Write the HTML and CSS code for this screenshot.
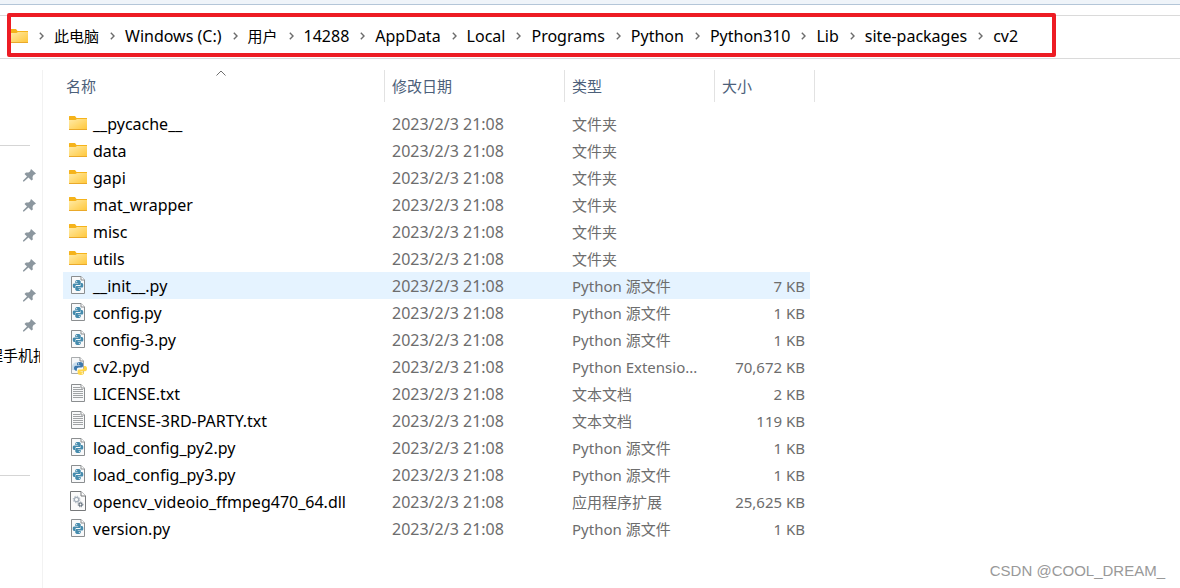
FILE: index.html
```html
<!DOCTYPE html>
<html lang="zh-CN">
<head>
<meta charset="utf-8">
<title>cv2</title>
<meta name="viewport" content="width=device-width, initial-scale=1">
<link rel="stylesheet" href="styles.css">
</head>
<body>
<svg class="sprite" aria-hidden="true">
  <defs>
    <linearGradient id="gold" x1="0" y1="0" x2="1" y2="1">
      <stop offset="0" stop-color="#ffeba8"/><stop offset="1" stop-color="#ffc637"/>
    </linearGradient>
    <symbol id="folder" viewBox="0 0 18 14">
      <path d="M0 0.500Q0 0 .5 0H6L7.500 2H18V5H0Z" fill="#f5b31b"/>
      <path d="M0 4H6.500L8 3H18V14H0Z" fill="url(#gold)"/>
      <path d="M0 13.500H18" stroke="#eaa92a"/>
    </symbol>
    <symbol id="page" viewBox="0 0 14 18">
      <path d="M.5.5H10L13.500 4V17.500H.5Z" fill="#f8f9fa" stroke="#8b8e90"/>
      <path d="M10 .5V4H13.500" fill="#fff" stroke="#8b8e90"/>
    </symbol>
    <symbol id="snake" viewBox="0 0 10 10">
      <path d="M5 0C3.200 0 2.500.6 2.500 1.600V2.700H5.200V3.100H1.500C.5 3.100 0 3.900 0 5.100S.6 7.200 1.500 7.200H2.400V6C2.400 5.100 3.100 4.500 4 4.500H6.300C7 4.500 7.500 4 7.500 3.300V1.600C7.500.6 6.600 0 5 0Z"/>
      <circle cx="3.800" cy="1.500" r=".5" fill="#fff"/>
    </symbol>
    <symbol id="py" viewBox="0 0 14 18">
      <use href="#page" width="14" height="18"/>
      <g fill="#458bad"><use href="#snake" x="1.500" y="4" width="11" height="11"/>
      <use href="#snake" x="1.500" y="4" width="11" height="11" transform="rotate(180 7 9.500)"/></g>
    </symbol>
    <symbol id="pyd" viewBox="0 0 16 18">
      <path d="M.5.5H9L12.500 4V16.500H.5Z" fill="#f6f7f8" stroke="#a9acae"/>
      <path d="M9 .5V4H12.500" fill="#fff" stroke="#8b8e90"/>
      <path d="M1 9Q2 5 7 5L4 13H1Z" fill="#c9ddec"/>
      <use href="#snake" x="3" y="5" width="12" height="12" fill="#3d78ad"/>
      <use href="#snake" x="3.500" y="5.500" width="12.500" height="12.500" fill="#ffd649" transform="rotate(180 9.750 11.750)"/>
    </symbol>
    <symbol id="txt" viewBox="0 0 14 18">
      <use href="#page" width="14" height="18"/>
      <path d="M2 3.500H9M2 5.500H12M2 7.500H12M2 9.500H12M2 11.500H12M2 13.500H12" stroke="#a0a3a5"/>
    </symbol>
    <symbol id="dll" viewBox="0 0 16 20">
      <path d="M.5.5H11L15.500 5V19.500H.5Z" fill="#fbfbfb" stroke="#77797b"/>
      <path d="M11 .5V5H15.500" fill="#fff" stroke="#77797b"/>
      <circle cx="6.500" cy="8.500" r="2.200" fill="none" stroke="#a4afba" stroke-width="1.300"/>
      <circle cx="6.500" cy="8.500" r="3.300" fill="none" stroke="#a4afba" stroke-dasharray="1.300 1.290"/>
      <circle cx="10.500" cy="13.500" r="1.500" fill="none" stroke="#65717d" stroke-width="1.200"/>
      <circle cx="10.500" cy="13.500" r="2.400" fill="none" stroke="#65717d" stroke-dasharray="1 .885"/>
    </symbol>
    <symbol id="pin" viewBox="0 0 13 13">
      <path d="M8 0L13 4.500L11.500 5.500L10.500 6L9.500 8L9.800 10.500L8.500 11.500L5.500 8.500L1 12.500L0 12.500L0 11.500L4 7.500L1.500 5L3 3.500L5.500 3.600L7 2.500Z" fill="#8c979f"/>
    </symbol>
    <symbol id="chevron" viewBox="0 0 5 8">
      <path d="M.8.8L4 4L.8 7.200" fill="none" stroke="#6c6c6c" stroke-width="1.400"/>
    </symbol>
  </defs>
</svg>

<div class="toolbar"></div>
<header class="address">
  <nav class="crumbs" aria-label="路径">
    <svg class="i-folder"><use href="#folder"/></svg>
    <svg class="chev"><use href="#chevron"/></svg><a class="zh" href="#">此电脑</a>
    <svg class="chev"><use href="#chevron"/></svg><a href="#">Windows (C:)</a>
    <svg class="chev"><use href="#chevron"/></svg><a class="zh" href="#">用户</a>
    <svg class="chev"><use href="#chevron"/></svg><a href="#">14288</a>
    <svg class="chev"><use href="#chevron"/></svg><a href="#">AppData</a>
    <svg class="chev"><use href="#chevron"/></svg><a href="#">Local</a>
    <svg class="chev"><use href="#chevron"/></svg><a href="#">Programs</a>
    <svg class="chev"><use href="#chevron"/></svg><a href="#">Python</a>
    <svg class="chev"><use href="#chevron"/></svg><a href="#">Python310</a>
    <svg class="chev"><use href="#chevron"/></svg><a href="#">Lib</a>
    <svg class="chev"><use href="#chevron"/></svg><a href="#">site-packages</a>
    <svg class="chev"><use href="#chevron"/></svg><a href="#">cv2</a>
  </nav>
</header>

<div class="body">
  <aside class="side">
    <hr>
    <ul class="pins">
      <li><svg><use href="#pin"/></svg></li>
      <li><svg><use href="#pin"/></svg></li>
      <li><svg><use href="#pin"/></svg></li>
      <li><svg><use href="#pin"/></svg></li>
      <li><svg><use href="#pin"/></svg></li>
      <li><svg><use href="#pin"/></svg></li>
      <li class="recent">程手机拍</li>
    </ul>
    <hr class="lower">
  </aside>
  <main class="files">
    <table>
      <colgroup><col class="c-name"><col class="c-date"><col class="c-type"><col class="c-size"></colgroup>
      <thead>
        <tr>
          <th aria-sort="ascending"><button type="button">名称</button><svg class="sort" viewBox="0 0 10 6"><path d="M.5 5.500L5 1L9.500 5.500" fill="none" stroke="#6f6f6f"/></svg></th>
          <th><button type="button">修改日期</button></th>
          <th><button type="button">类型</button></th>
          <th><button type="button">大小</button></th>
        </tr>
      </thead>
      <tbody>
        <tr><td><span class="name"><svg class="i-folder"><use href="#folder"/></svg>__pycache__</span></td><td class="date">2023/2/3 21:08</td><td>文件夹</td><td></td></tr>
        <tr><td><span class="name"><svg class="i-folder"><use href="#folder"/></svg>data</span></td><td class="date">2023/2/3 21:08</td><td>文件夹</td><td></td></tr>
        <tr><td><span class="name"><svg class="i-folder"><use href="#folder"/></svg>gapi</span></td><td class="date">2023/2/3 21:08</td><td>文件夹</td><td></td></tr>
        <tr><td><span class="name"><svg class="i-folder"><use href="#folder"/></svg>mat_wrapper</span></td><td class="date">2023/2/3 21:08</td><td>文件夹</td><td></td></tr>
        <tr><td><span class="name"><svg class="i-folder"><use href="#folder"/></svg>misc</span></td><td class="date">2023/2/3 21:08</td><td>文件夹</td><td></td></tr>
        <tr><td><span class="name"><svg class="i-folder"><use href="#folder"/></svg>utils</span></td><td class="date">2023/2/3 21:08</td><td>文件夹</td><td></td></tr>
        <tr class="hover"><td><span class="name"><svg class="i-file"><use href="#py"/></svg>__init__.py</span></td><td class="date">2023/2/3 21:08</td><td>Python 源文件</td><td>7 KB</td></tr>
        <tr><td><span class="name"><svg class="i-file"><use href="#py"/></svg>config.py</span></td><td class="date">2023/2/3 21:08</td><td>Python 源文件</td><td>1 KB</td></tr>
        <tr><td><span class="name"><svg class="i-file"><use href="#py"/></svg>config-3.py</span></td><td class="date">2023/2/3 21:08</td><td>Python 源文件</td><td>1 KB</td></tr>
        <tr><td><span class="name"><svg class="i-pyd"><use href="#pyd"/></svg>cv2.pyd</span></td><td class="date">2023/2/3 21:08</td><td>Python Extensio...</td><td>70,672 KB</td></tr>
        <tr><td><span class="name"><svg class="i-file"><use href="#txt"/></svg>LICENSE.txt</span></td><td class="date">2023/2/3 21:08</td><td>文本文档</td><td>2 KB</td></tr>
        <tr><td><span class="name"><svg class="i-file"><use href="#txt"/></svg>LICENSE-3RD-PARTY.txt</span></td><td class="date">2023/2/3 21:08</td><td>文本文档</td><td>119 KB</td></tr>
        <tr><td><span class="name"><svg class="i-file"><use href="#py"/></svg>load_config_py2.py</span></td><td class="date">2023/2/3 21:08</td><td>Python 源文件</td><td>1 KB</td></tr>
        <tr><td><span class="name"><svg class="i-file"><use href="#py"/></svg>load_config_py3.py</span></td><td class="date">2023/2/3 21:08</td><td>Python 源文件</td><td>1 KB</td></tr>
        <tr><td><span class="name"><svg class="i-dll"><use href="#dll"/></svg>opencv_videoio_ffmpeg470_64.dll</span></td><td class="date">2023/2/3 21:08</td><td>应用程序扩展</td><td>25,625 KB</td></tr>
        <tr><td><span class="name"><svg class="i-file"><use href="#py"/></svg>version.py</span></td><td class="date">2023/2/3 21:08</td><td>Python 源文件</td><td>1 KB</td></tr>
      </tbody>
    </table>
  </main>
</div>
<div class="watermark">CSDN @COOL_DREAM_</div>
</body>
</html>
```

FILE: styles.css
```css
* { box-sizing: border-box; }
body {
  margin: 0;
  min-height: 100vh;
  display: flex;
  flex-direction: column;
  position: relative;
  background: #fff;
  color: #000;
  font: 15px/20px "Noto Sans", "Noto Sans CJK SC", sans-serif;
}
svg { flex: none; display: block; }
.sprite { position: absolute; width: 0; height: 0; }

.toolbar { height: 5px; background: #eff4f9; border-bottom: 1px solid #b4c6d8; }
.address {
  margin-top: 10px;
  border: solid #dadada;
  border-width: 1px 0;
  display: flex;
  padding-left: 7px;
}
.crumbs {
  position: relative;
  display: flex;
  align-items: center;
  height: 42px;
  padding: 0 38px 2px 3px;
  white-space: nowrap;
  font-size: 16px;
}
/* highlight frame drawn over the bar's borders */
.crumbs::after {
  content: "";
  position: absolute;
  inset: -3px 0 1px;
  border: 4px solid #ed1c24;
  border-radius: 2px;
  pointer-events: none;
}
.crumbs a { color: inherit; text-decoration: none; }
.crumbs .zh { font-size: 15px; }
.chev { width: 5px; height: 8px; margin: 0 10px 0 11px; }

.i-folder { width: 18px; height: 14px; }
.i-file { width: 14px; height: 18px; margin: 0 2px; }
.i-pyd { width: 16px; height: 18px; margin-left: 2px; }
.i-dll { width: 16px; height: 20px; margin: 0 1px; }

.body { flex: 1; display: flex; margin-top: 11px; }
.side { width: 43px; border-right: 1px solid #f2f2f2; padding-top: 75px; }
.side hr { margin: 0 12px 0 0; border: 0; border-top: 1px solid #d5d5d5; }
.side .lower { margin-top: 105px; }
.pins { list-style: none; margin: 14px 0 0; padding: 0 2px 0 0; }
.pins li { height: 30px; display: flex; align-items: center; justify-content: flex-end; padding-right: 4px; }
.pins svg { width: 13px; height: 13px; }
.pins .recent { justify-content: flex-start; text-indent: -12px; overflow: hidden; white-space: nowrap; padding: 0; }

.files { flex: 1; padding-left: 20px; }
table { border-collapse: separate; border-spacing: 0; table-layout: fixed; width: 752px; }
.c-name { width: 322px; }
.c-date { width: 180px; }
.c-type { width: 150px; }
.c-size { width: 100px; }
th { position: relative; height: 32px; padding: 0 0 0 7px; text-align: left; border-right: 1px solid #e2e2e2; }
th:first-child { padding-left: 3px; }
th button { padding: 0; border: 0; background: none; font: inherit; font-weight: 400; color: #4c607a; }
.sort { position: absolute; top: 0; left: 153px; width: 10px; height: 6px; }
tbody::before { content: ""; display: block; height: 8px; }
td { height: 27px; padding: 0 0 0 7px; color: #6d6d6d; white-space: nowrap; }
td:first-child { padding-left: 6px; color: #000; }
td:last-child { padding: 0 5px 0 0; text-align: right; border-right: 5px solid transparent; background-clip: padding-box; }
.name { display: flex; align-items: center; gap: 6px; }
.name svg { margin-bottom: 2px; }
.name, .date { font-size: 16px; }
.hover td { background-color: #e5f3ff; }

.watermark {
  position: absolute;
  right: 15px;
  bottom: 7px;
  color: #999;
  font: 15px/20px "Liberation Sans", Arial, sans-serif;
}
```
